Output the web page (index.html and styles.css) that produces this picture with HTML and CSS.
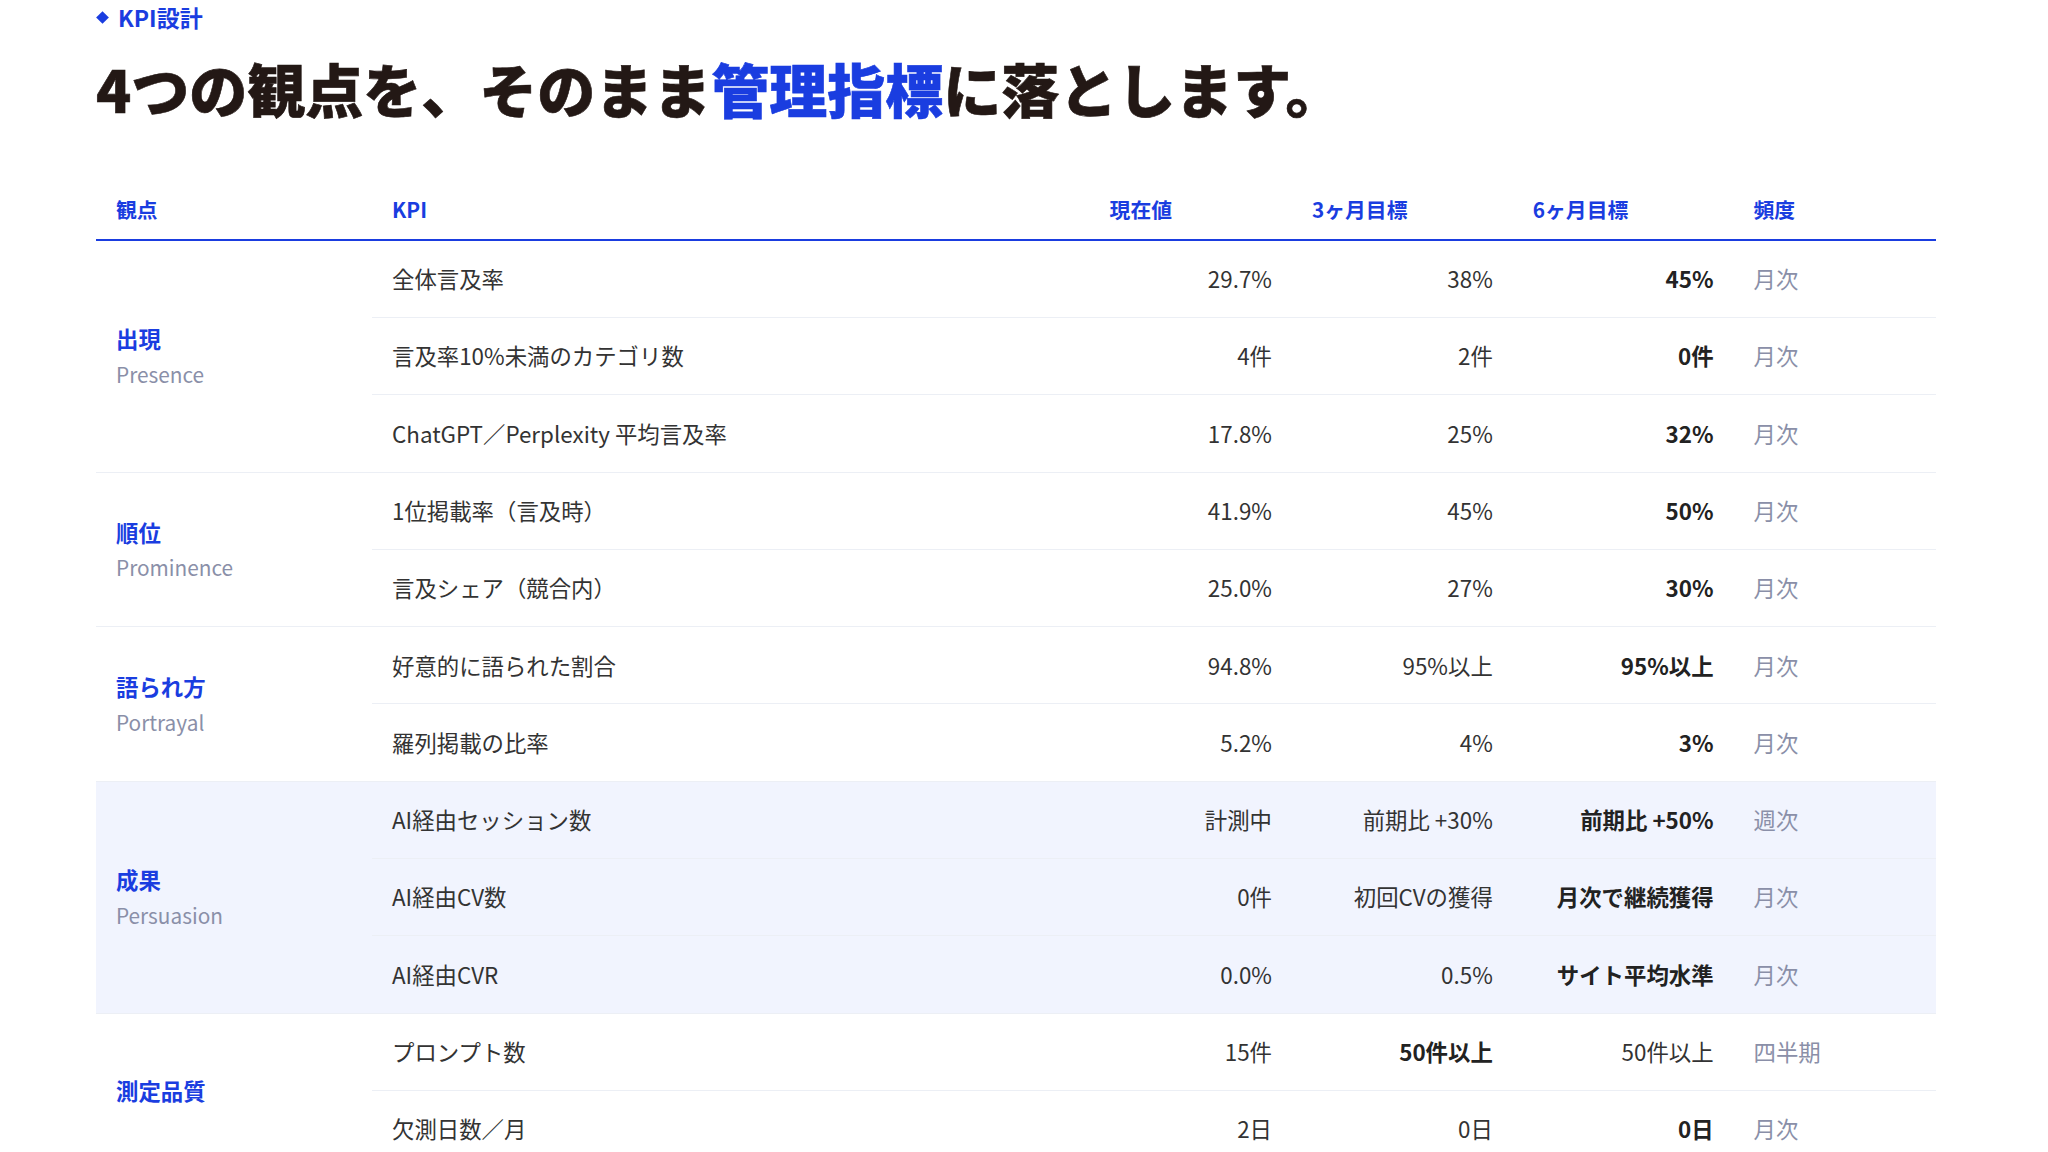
FILE: index.html
```html
<!DOCTYPE html>
<html lang="ja">
<head>
<meta charset="utf-8">
<title>KPI設計</title>
<link rel="stylesheet" href="styles.css">
</head>
<body>
<main class="page">
  <div class="eyebrow"><span class="diamond"></span><span>KPI設計</span></div>
  <h1 class="title">4つの観点を、そのまま<span class="accent">管理指標</span>に落とします。</h1>
  <table class="kpi">
    <colgroup>
      <col class="c-view"><col class="c-kpi"><col class="c-now"><col class="c-3m"><col class="c-6m"><col class="c-freq">
    </colgroup>
    <thead>
      <tr><th>観点</th><th>KPI</th><th>現在値</th><th>3ヶ月目標</th><th>6ヶ月目標</th><th>頻度</th></tr>
    </thead>
    <tbody>
      <tr>
        <td class="group" rowspan="3"><div class="g-ja">出現</div><div class="g-en">Presence</div></td>
        <td>全体言及率</td><td class="num">29.7%</td><td class="num">38%</td><td class="num strong">45%</td><td class="freq">月次</td>
      </tr>
      <tr><td>言及率10%未満のカテゴリ数</td><td class="num">4件</td><td class="num">2件</td><td class="num strong">0件</td><td class="freq">月次</td></tr>
      <tr><td>ChatGPT／Perplexity 平均言及率</td><td class="num">17.8%</td><td class="num">25%</td><td class="num strong">32%</td><td class="freq">月次</td></tr>

      <tr>
        <td class="group" rowspan="2"><div class="g-ja">順位</div><div class="g-en">Prominence</div></td>
        <td>1位掲載率（言及時）</td><td class="num">41.9%</td><td class="num">45%</td><td class="num strong">50%</td><td class="freq">月次</td>
      </tr>
      <tr><td>言及シェア（競合内）</td><td class="num">25.0%</td><td class="num">27%</td><td class="num strong">30%</td><td class="freq">月次</td></tr>

      <tr>
        <td class="group" rowspan="2"><div class="g-ja">語られ方</div><div class="g-en">Portrayal</div></td>
        <td>好意的に語られた割合</td><td class="num">94.8%</td><td class="num">95%以上</td><td class="num strong">95%以上</td><td class="freq">月次</td>
      </tr>
      <tr><td>羅列掲載の比率</td><td class="num">5.2%</td><td class="num">4%</td><td class="num strong">3%</td><td class="freq">月次</td></tr>

      <tr class="hl">
        <td class="group" rowspan="3"><div class="g-ja">成果</div><div class="g-en">Persuasion</div></td>
        <td>AI経由セッション数</td><td class="num">計測中</td><td class="num">前期比 +30%</td><td class="num strong">前期比 +50%</td><td class="freq">週次</td>
      </tr>
      <tr class="hl"><td>AI経由CV数</td><td class="num">0件</td><td class="num">初回CVの獲得</td><td class="num strong">月次で継続獲得</td><td class="freq">月次</td></tr>
      <tr class="hl"><td>AI経由CVR</td><td class="num">0.0%</td><td class="num">0.5%</td><td class="num strong">サイト平均水準</td><td class="freq">月次</td></tr>

      <tr>
        <td class="group" rowspan="2"><div class="g-ja">測定品質</div></td>
        <td>プロンプト数</td><td class="num">15件</td><td class="num strong">50件以上</td><td class="num">50件以上</td><td class="freq">四半期</td>
      </tr>
      <tr><td>欠測日数／月</td><td class="num">2日</td><td class="num">0日</td><td class="num strong">0日</td><td class="freq">月次</td></tr>
    </tbody>
  </table>
</main>
</body>
</html>
```
FILE: styles.css
```css
html, body {
  margin: 0;
  padding: 0;
  background: #ffffff;
}
body {
  font-family: "Noto Sans CJK JP", "Noto Sans", sans-serif;
  color: #333333;
}
.page {
  padding: 1px 112px 0 96px;
}
.eyebrow {
  display: flex;
  align-items: center;
  gap: 11px;
  font-size: 23px;
  line-height: 33.6px;
  font-weight: 700;
  color: #1a3de0;
}
.diamond {
  width: 9px;
  height: 9px;
  background: #1a3de0;
  transform: rotate(45deg);
  margin-left: 2px;
}
.title {
  margin: 16px 0 0 0;
  font-size: 58px;
  line-height: 74px;
  font-weight: 900;
  color: #231815;
  letter-spacing: 0;
  -webkit-text-stroke: 0.6px currentColor;
}
.accent {
  color: #1a3de0;
}
.kpi {
  margin-top: 55px;
  width: 1840px;
  border-collapse: collapse;
  table-layout: fixed;
}
.c-view { width: 15%; }
.c-kpi { width: 39%; }
.c-now { width: 11%; }
.c-3m { width: 12%; }
.c-6m { width: 12%; }
.c-freq { width: 11%; }
.kpi th {
  text-align: left;
  font-size: 20.8px;
  line-height: 31.2px;
  font-weight: 700;
  color: #1a3de0;
  padding: 14px 20px;
  border-bottom: 2px solid #1a3de0;
}
.kpi td {
  font-size: 22.4px;
  line-height: 33.6px;
  padding: 21.35px 20px;
  border-bottom: 1px solid #eceff5;
  color: #333333;
  white-space: nowrap;
}
.kpi td.num {
  text-align: right;
}
.kpi td.strong {
  font-weight: 700;
  color: #222222;
}
.kpi td.freq {
  color: #8a8fa8;
}
.kpi tr.hl td {
  background: #f1f4fe;
}
.kpi td.group {
  vertical-align: middle;
}
.g-ja {
  font-weight: 700;
  color: #1a3de0;
  font-size: 22.4px;
  line-height: 33.6px;
}
.g-en {
  margin-top: 3px;
  font-size: 20.8px;
  line-height: 31.2px;
  color: #8a8fa8;
}
```
